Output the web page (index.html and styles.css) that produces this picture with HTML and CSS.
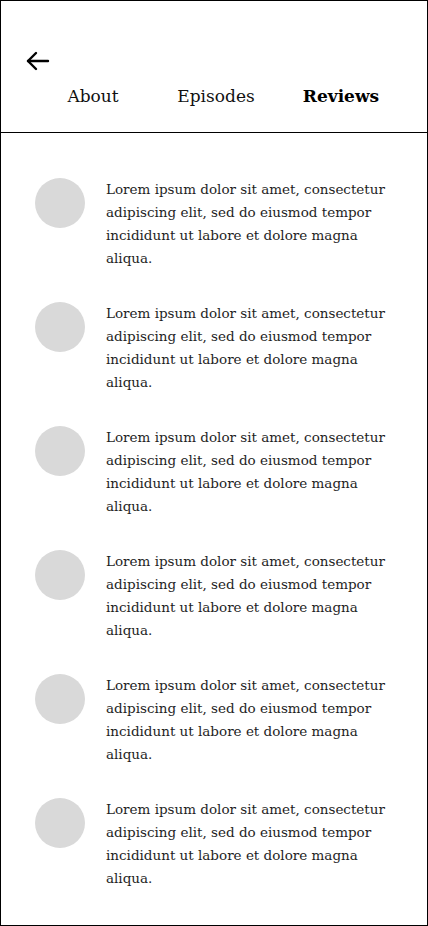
FILE: index.html
```html
<!DOCTYPE html>
<html>
<head>
<meta charset="utf-8">
<link rel="stylesheet" href="styles.css">
</head>
<body>
<div class="screen">
  <header class="header">
    <div class="back">
      <svg width="24" height="20" viewBox="0 0 24 20" fill="none" stroke="#000" stroke-width="2.4" stroke-linecap="round" stroke-linejoin="round">
        <path d="M2 10 H22"/>
        <path d="M10 2 L2 10 L10 18"/>
      </svg>
    </div>
    <nav class="tabs">
      <span class="tab">About</span>
      <span class="tab">Episodes</span>
      <span class="tab active">Reviews</span>
    </nav>
  </header>
  <main class="list">
    <div class="review"><div class="avatar"></div><p class="text">Lorem ipsum dolor sit amet, consectetur adipiscing elit, sed do eiusmod tempor incididunt ut labore et dolore magna aliqua.</p></div>
    <div class="review"><div class="avatar"></div><p class="text">Lorem ipsum dolor sit amet, consectetur adipiscing elit, sed do eiusmod tempor incididunt ut labore et dolore magna aliqua.</p></div>
    <div class="review"><div class="avatar"></div><p class="text">Lorem ipsum dolor sit amet, consectetur adipiscing elit, sed do eiusmod tempor incididunt ut labore et dolore magna aliqua.</p></div>
    <div class="review"><div class="avatar"></div><p class="text">Lorem ipsum dolor sit amet, consectetur adipiscing elit, sed do eiusmod tempor incididunt ut labore et dolore magna aliqua.</p></div>
    <div class="review"><div class="avatar"></div><p class="text">Lorem ipsum dolor sit amet, consectetur adipiscing elit, sed do eiusmod tempor incididunt ut labore et dolore magna aliqua.</p></div>
    <div class="review"><div class="avatar"></div><p class="text">Lorem ipsum dolor sit amet, consectetur adipiscing elit, sed do eiusmod tempor incididunt ut labore et dolore magna aliqua.</p></div>
  </main>
</div>
</body>
</html>
```

FILE: styles.css
```css
* { box-sizing: border-box; }
html, body { margin: 0; padding: 0; background: #fff; }
body { font-family: "DejaVu Serif", "Liberation Serif", serif; color: #1a1a1a; }
.screen {
  width: 428px;
  height: 926px;
  border: 1px solid #000;
  overflow: hidden;
}
.header {
  height: 132px;
  border-bottom: 1px solid #000;
  padding: 50px 0 0 25px;
}
.back { height: 20px; display: flex; align-items: center; }
.back svg { display: block; }
.tabs {
  display: grid;
  grid-template-columns: 124px 122px 128px;
  margin-left: 5px;
  margin-top: 13px;
}
.tab {
  text-align: center;
  font-size: 17px;
  line-height: 24px;
  color: #111;
}
.tab.active { font-weight: bold; color: #000; }
.list {
  padding: 45px 30px 0 34px;
  display: flex;
  flex-direction: column;
  gap: 32px;
}
.review { display: flex; align-items: flex-start; gap: 21px; }
.avatar {
  width: 50px;
  height: 50px;
  border-radius: 50%;
  background: #d9d9d9;
  flex: none;
}
.text {
  margin: 0;
  font-size: 13.5px;
  line-height: 23px;
  color: #1e1e1e;
}
```
